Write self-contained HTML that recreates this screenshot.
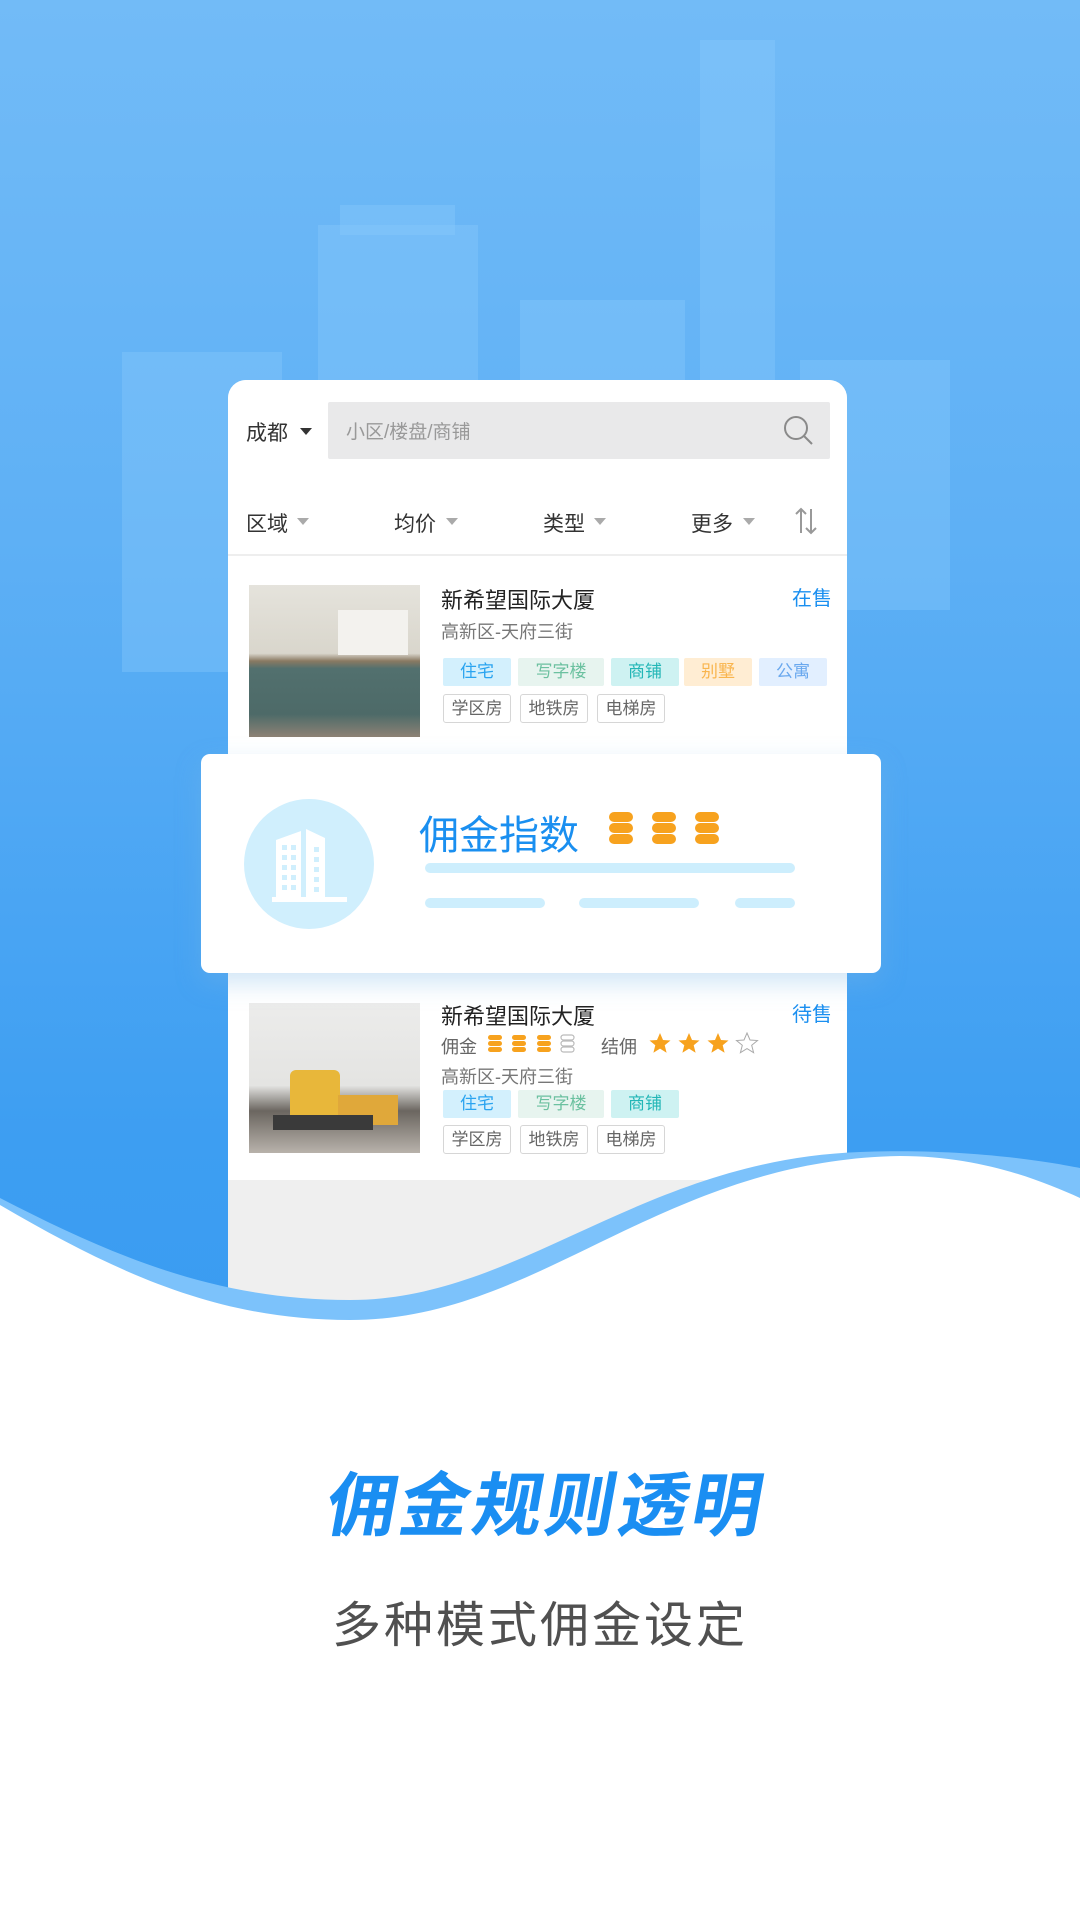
<!DOCTYPE html>
<html><head><meta charset="utf-8"><style>
*{margin:0;padding:0;box-sizing:border-box}
body{width:1080px;height:1920px;position:relative;overflow:hidden;background:#fff;font-family:"Liberation Sans","Noto Sans CJK SC",sans-serif}
.abs{position:absolute}
.bg{left:0;top:0;width:1080px;height:1340px;background:linear-gradient(180deg,#72bbf7 0%,#5eb0f5 40%,#3d9ef2 85%,#3a9cf1 100%)}
.bld{position:absolute;background:#8ccbfb;opacity:.35}
.phone{left:228px;top:380px;width:619px;height:960px;background:#efefef;border-radius:18px 18px 0 0;overflow:hidden}
.t{position:absolute;white-space:nowrap}
.tag{position:absolute;height:28px;font-size:17px;line-height:28px;text-align:center;border-radius:2px}
.otag{position:absolute;height:29px;font-size:17px;line-height:27px;text-align:center;border:1.5px solid #d6d6d6;border-radius:3px;color:#666;background:#fff}
.tri{position:absolute;width:0;height:0;border-left:6px solid transparent;border-right:6px solid transparent;border-top:7px solid #aaa}
.bar{position:absolute;height:10px;border-radius:5px;background:#cdeefd}
</style></head><body>
<div class="abs bg"></div>
<div class="bld" style="left:122px;top:352px;width:160px;height:320px"></div>
<div class="bld" style="left:318px;top:225px;width:160px;height:160px"></div>
<div class="bld" style="left:340px;top:205px;width:115px;height:30px"></div>
<div class="bld" style="left:520px;top:300px;width:165px;height:100px"></div>
<div class="bld" style="left:700px;top:40px;width:75px;height:350px"></div>
<div class="bld" style="left:800px;top:360px;width:150px;height:250px"></div>

<div class="abs phone">
  <div class="abs" style="left:0;top:0;width:619px;height:800px;background:#fff"></div>
  <div class="t" style="left:18px;top:37px;font-size:21px;color:#333">成都</div>
  <div class="tri" style="left:72px;top:48px;border-top-color:#333"></div>
  <div class="abs" style="left:100px;top:22px;width:502px;height:57px;background:#e9e9ea;border-radius:2px"></div>
  <div class="t" style="left:118px;top:37px;font-size:19px;color:#999">小区/楼盘/商铺</div>
  <svg class="abs" style="left:555px;top:35px" width="32" height="32" viewBox="0 0 32 32"><circle cx="13" cy="13" r="11" fill="none" stroke="#8a8a8a" stroke-width="2"/><path d="M21 21l8 8" stroke="#8a8a8a" stroke-width="2"/></svg>
  <div class="t" style="left:18px;top:128px;font-size:21px;color:#333">区域</div><div class="tri" style="left:69px;top:138px"></div>
  <div class="t" style="left:166px;top:128px;font-size:21px;color:#333">均价</div><div class="tri" style="left:218px;top:138px"></div>
  <div class="t" style="left:315px;top:128px;font-size:21px;color:#333">类型</div><div class="tri" style="left:366px;top:138px"></div>
  <div class="t" style="left:463px;top:128px;font-size:21px;color:#333">更多</div><div class="tri" style="left:515px;top:138px"></div>
  <svg class="abs" style="left:566px;top:125px" width="24" height="32" viewBox="0 0 24 32"><path d="M7 28V4M2 9l5-5 5 5M17 4v24M12 23l5 5 5-5" fill="none" stroke="#999" stroke-width="2"/></svg>
  <div class="abs" style="left:0;top:174px;width:619px;height:2px;background:#eee"></div>

  <div class="abs" style="left:21px;top:205px;width:171px;height:152px;background:linear-gradient(180deg,#e5e3dc 0%,#d9d6cc 45%,#8a7a62 50%,#52706e 55%,#4d6a68 85%,#8d8275 100%)"></div>
  <div class="abs" style="left:110px;top:230px;width:70px;height:45px;background:#f3f2ee"></div>
  <div class="t" style="left:213px;top:203px;font-size:22px;color:#222">新希望国际大厦</div>
  <div class="t" style="left:564px;top:202px;font-size:20px;color:#1a8ff0">在售</div>
  <div class="t" style="left:213px;top:238px;font-size:18px;color:#777">高新区-天府三街</div>
  <div class="tag" style="left:215px;top:278px;width:68px;background:#d3f0fd;color:#2aa4f0">住宅</div>
  <div class="tag" style="left:290px;top:278px;width:86px;background:#e7f4ef;color:#6cc1a0">写字楼</div>
  <div class="tag" style="left:383px;top:278px;width:68px;background:#cef2f2;color:#22b6b6">商铺</div>
  <div class="tag" style="left:456px;top:278px;width:68px;background:#ffedd3;color:#f9b54e">别墅</div>
  <div class="tag" style="left:531px;top:278px;width:68px;background:#e2efff;color:#6aa8ee">公寓</div>
  <div class="otag" style="left:215px;top:314px;width:68px">学区房</div>
  <div class="otag" style="left:292px;top:314px;width:68px">地铁房</div>
  <div class="otag" style="left:369px;top:314px;width:68px">电梯房</div>

  <div class="abs" style="left:21px;top:623px;width:171px;height:150px;background:linear-gradient(180deg,#ececeb 0%,#e4e4e2 55%,#6b6660 72%,#b8b2ab 100%)"></div>
  <div class="abs" style="left:62px;top:690px;width:50px;height:45px;background:#e8b73a;border-radius:6px 6px 0 0"></div>
  <div class="abs" style="left:110px;top:715px;width:60px;height:30px;background:#e0a83a"></div>
  <div class="abs" style="left:45px;top:735px;width:100px;height:15px;background:#3a3a3a"></div>
  <div class="t" style="left:213px;top:619px;font-size:22px;color:#222">新希望国际大厦</div>
  <div class="t" style="left:564px;top:618px;font-size:20px;color:#1a8ff0">待售</div>
  <div class="t" style="left:213px;top:653px;font-size:18px;color:#666">佣金</div>
  <svg class="abs" style="left:258px;top:653px" width="90" height="24" viewBox="0 0 90 24"><g fill="#f7a21e"><rect x="2" y="2" width="14" height="5" rx="2.5"/><rect x="2" y="8" width="14" height="5" rx="2.5"/><rect x="2" y="14" width="14" height="5" rx="2.5"/><rect x="26" y="2" width="14" height="5" rx="2.5"/><rect x="26" y="8" width="14" height="5" rx="2.5"/><rect x="26" y="14" width="14" height="5" rx="2.5"/><rect x="51" y="2" width="14" height="5" rx="2.5"/><rect x="51" y="8" width="14" height="5" rx="2.5"/><rect x="51" y="14" width="14" height="5" rx="2.5"/></g><g fill="none" stroke="#bbb" stroke-width="1.2"><rect x="75" y="2" width="13" height="5" rx="2.5"/><rect x="75" y="8" width="13" height="5" rx="2.5"/><rect x="75" y="14" width="13" height="5" rx="2.5"/></g></svg>
  <div class="t" style="left:373px;top:653px;font-size:18px;color:#666">结佣</div>
  <svg class="abs" style="left:421px;top:652px" width="110" height="24" viewBox="0 0 110 24"><g fill="#f7a21e"><path id="s" d="M11 1l3 7 7.5.5-5.8 4.8 1.9 7.4L11 16.6 4.4 20.7l1.9-7.4L.5 8.5 8 8z"/><use href="#s" x="29"/><use href="#s" x="58"/></g><use href="#s" x="87" fill="none" stroke="#aaa" stroke-width="1"/></svg>
  <div class="t" style="left:213px;top:683px;font-size:18px;color:#777">高新区-天府三街</div>
  <div class="tag" style="left:215px;top:710px;width:68px;background:#d3f0fd;color:#2aa4f0">住宅</div>
  <div class="tag" style="left:290px;top:710px;width:86px;background:#e7f4ef;color:#6cc1a0">写字楼</div>
  <div class="tag" style="left:383px;top:710px;width:68px;background:#cef2f2;color:#22b6b6">商铺</div>
  <div class="otag" style="left:215px;top:745px;width:68px">学区房</div>
  <div class="otag" style="left:292px;top:745px;width:68px">地铁房</div>
  <div class="otag" style="left:369px;top:745px;width:68px">电梯房</div>
</div>

<div class="abs" style="left:201px;top:754px;width:680px;height:219px;background:#fff;border-radius:9px;box-shadow:0 10px 25px rgba(120,180,230,.35)"></div>
<div class="abs" style="left:244px;top:799px;width:130px;height:130px;border-radius:50%;background:#d0effd"></div>
<svg class="abs" style="left:272px;top:825px" width="75" height="78" viewBox="0 0 75 78"><g fill="#fff"><path d="M4 72V15l25-9v66z"/><path d="M34 4l19 9v59H34z"/><rect x="0" y="72" width="75" height="5"/></g><g fill="#d0effd"><rect x="10" y="20" width="5" height="5"/><rect x="19" y="20" width="5" height="5"/><rect x="10" y="30" width="5" height="5"/><rect x="19" y="30" width="5" height="5"/><rect x="10" y="40" width="5" height="5"/><rect x="19" y="40" width="5" height="5"/><rect x="10" y="50" width="5" height="5"/><rect x="19" y="50" width="5" height="5"/><rect x="10" y="60" width="5" height="5"/><rect x="19" y="60" width="5" height="5"/><rect x="42" y="22" width="5" height="5"/><rect x="42" y="32" width="5" height="5"/><rect x="42" y="42" width="5" height="5"/><rect x="42" y="52" width="5" height="5"/><rect x="42" y="62" width="5" height="5"/><rect x="29" y="6" width="5" height="66"/></g></svg>
<div class="t" style="left:419px;top:803px;font-size:40px;color:#1a8ff0">佣金指数</div>
<svg class="abs" style="left:606px;top:810px" width="120" height="38" viewBox="0 0 120 38"><g fill="#f7a21e"><rect x="3" y="2" width="24" height="10" rx="5"/><rect x="3" y="13" width="24" height="10" rx="5"/><rect x="3" y="24" width="24" height="10" rx="5"/><rect x="46" y="2" width="24" height="10" rx="5"/><rect x="46" y="13" width="24" height="10" rx="5"/><rect x="46" y="24" width="24" height="10" rx="5"/><rect x="89" y="2" width="24" height="10" rx="5"/><rect x="89" y="13" width="24" height="10" rx="5"/><rect x="89" y="24" width="24" height="10" rx="5"/></g></svg>
<div class="bar" style="left:425px;top:863px;width:370px"></div>
<div class="bar" style="left:425px;top:898px;width:120px"></div>
<div class="bar" style="left:579px;top:898px;width:120px"></div>
<div class="bar" style="left:735px;top:898px;width:60px"></div>

<svg class="abs" style="left:0;top:1100px" width="1080" height="260" viewBox="0 0 1080 260">
<path d="M0 98 C120 160 220 200 350 200 C520 200 640 60 860 52 C960 48 1040 60 1080 68 L1080 260 L0 260Z" fill="#7cc2fb"/>
<path d="M0 105 C120 175 220 220 350 220 C540 220 660 60 900 56 C980 56 1040 80 1080 98 L1080 260 L0 260Z" fill="#fff"/>
</svg>

<div class="t" style="left:0;width:1080px;text-align:center;top:1450px;font-size:70px;font-weight:bold;font-style:italic;color:#1a8ef2;letter-spacing:3px;transform:skewX(4deg)">佣金规则透明</div>
<div class="t" style="left:0;width:1080px;text-align:center;top:1586px;font-size:49px;color:#505050;letter-spacing:3px">多种模式佣金设定</div>
</body></html>
